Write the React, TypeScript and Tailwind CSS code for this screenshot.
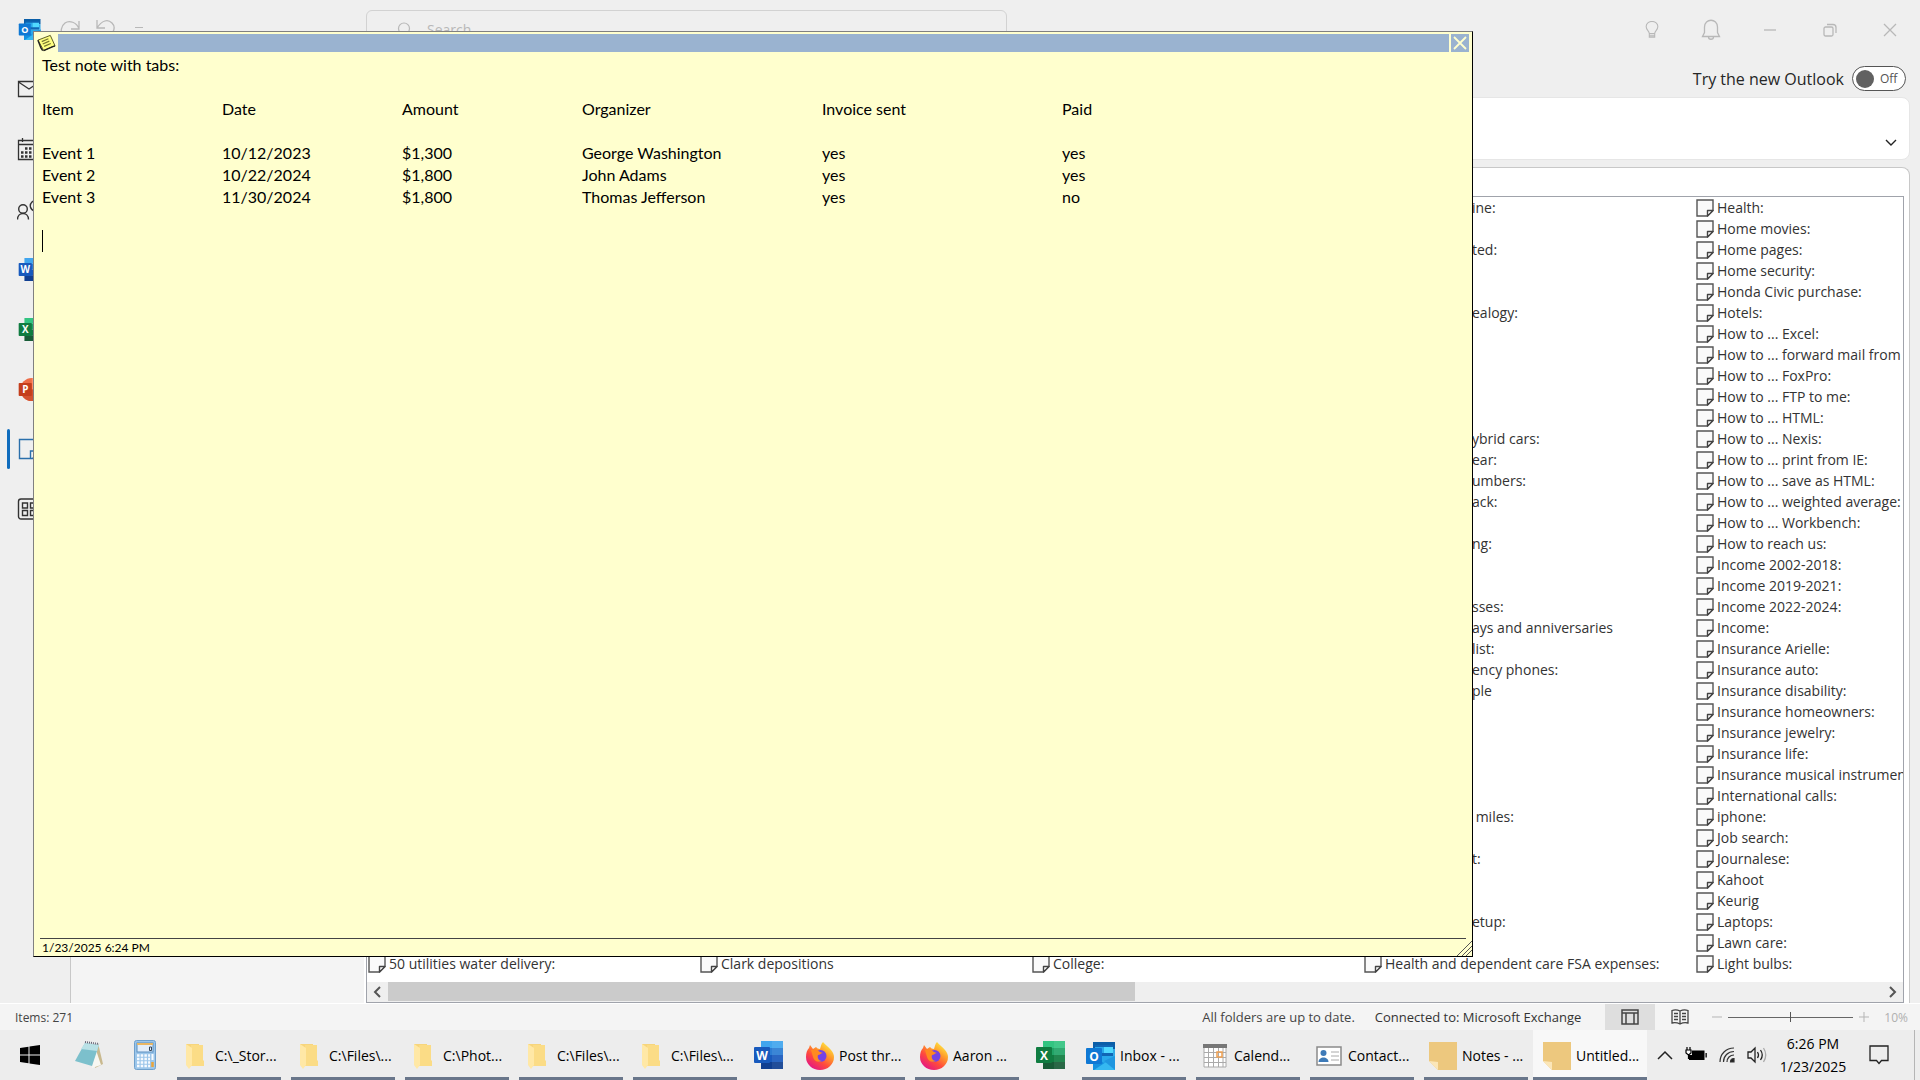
import React from 'react';

type OfficeKind = 'word' | 'excel' | 'outlook' | 'powerpoint';

interface NoteEvent {
  item: string;
  date: string;
  amount: string;
  organizer: string;
  invoice: string;
  paid: string;
}

const noteEvents: NoteEvent[] = [
  { item: 'Event 1', date: '10/12/2023', amount: '$1,300', organizer: 'George Washington', invoice: 'yes', paid: 'yes' },
  { item: 'Event 2', date: '10/22/2024', amount: '$1,800', organizer: 'John Adams', invoice: 'yes', paid: 'yes' },
  { item: 'Event 3', date: '11/30/2024', amount: '$1,800', organizer: 'Thomas Jefferson', invoice: 'yes', paid: 'no' },
];

const ROWS = 37;

// Titles that stick out past the right edge of the note window, by row
const clippedNotes: Record<number, string> = {
  0: 'ine:',
  2: 'ted:',
  5: 'ealogy:',
  11: 'ybrid cars:',
  12: 'ear:',
  13: 'umbers:',
  14: 'ack:',
  16: 'ng:',
  19: 'sses:',
  20: 'ays and anniversaries',
  21: 'list:',
  22: 'ency phones:',
  23: 'ple',
  29: ' miles:',
  31: 't:',
  34: 'etup:',
};

const lastColumn = [
  'Health:', 'Home movies:', 'Home pages:', 'Home security:', 'Honda Civic purchase:', 'Hotels:',
  'How to ... Excel:', 'How to ... forward mail from', 'How to ... FoxPro:', 'How to ... FTP to me:',
  'How to ... HTML:', 'How to ... Nexis:', 'How to ... print from IE:', 'How to ... save as HTML:',
  'How to ... weighted average:', 'How to ... Workbench:', 'How to reach us:', 'Income 2002-2018:',
  'Income 2019-2021:', 'Income 2022-2024:', 'Income:', 'Insurance Arielle:', 'Insurance auto:',
  'Insurance disability:', 'Insurance homeowners:', 'Insurance jewelry:', 'Insurance life:',
  'Insurance musical instrument', 'International calls:', 'iphone:', 'Job search:', 'Journalese:',
  'Kahoot', 'Keurig', 'Laptops:', 'Lawn care:', 'Light bulbs:',
];

const officeColors: Record<OfficeKind, { letter: string; tile: string; bands: string[] }> = {
  word: { letter: 'W', tile: '#185abd', bands: ['#41a5ee', '#2b7cd3', '#185abd', '#103f91'] },
  excel: { letter: 'X', tile: '#107c41', bands: ['#33c481', '#21a366', '#107c41', '#185c37'] },
  outlook: { letter: 'O', tile: '#0f78d4', bands: ['#0a5ea8', '#32a9e7', '#28a8ea', '#1490df'] },
  powerpoint: { letter: 'P', tile: '#c43e1c', bands: [] },
};

const OfficeIcon: React.FC<{ kind: OfficeKind; className?: string }> = ({ kind, className }) => {
  const { letter, tile, bands } = officeColors[kind];
  return (
    <svg viewBox="0 0 30 28" className={className} aria-hidden="true">
      {kind === 'powerpoint' && (
        <>
          <circle cx="16" cy="14" r="14" fill="#ed6c47" />
          <path d="M16 0a14 14 0 0 1 14 14H16z" fill="#ff8f6b" />
          <path d="M2 14h28a14 14 0 0 1-28 0z" fill="#d35230" />
        </>
      )}
      {bands.map((color, i) => (
        <rect key={color} x="7" y={i * 7} width="22" height="7" fill={color} />
      ))}
      {(kind === 'word' || kind === 'excel') && <rect x="18" y="0" width="11" height="28" fill="#fff" opacity="0.08" />}
      {kind === 'outlook' && (
        <>
          <path d="M9 3h18v11H9z" fill="#1066b5" />
          <path d="M18 5h9v6h-9z" fill="#50d9ff" />
          <path d="M9 5h9v6H9z" fill="#28a8ea" />
          <path d="M7 14l11 7 11-7v14H7z" fill="#1490df" />
          <path d="M29 14L8 28h21z" fill="#35b8f1" />
          <path d="M18 19l11 9V14z" fill="#1f96e0" />
        </>
      )}
      <rect x="0" y="6" width="16" height="16" rx="1" fill={tile} />
      <text x="8" y="18.5" textAnchor="middle" fontSize="12" fontWeight="700" fontFamily="Open Sans, sans-serif" fill="#fff">
        {letter}
      </text>
    </svg>
  );
};

const NoteIcon = () => (
  <svg viewBox="0 0 18 18" className="size-[18px] shrink-0" aria-hidden="true">
    <path d="M1 1h16v10.500l-5.500 5.500H1z" fill="#fafafa" stroke="#555" strokeWidth="1.400" />
    <path d="M17 11.500h-5.500V17z" fill="#fff" stroke="#444" strokeWidth="1.400" strokeLinejoin="round" />
  </svg>
);

const FolderIcon = () => (
  <svg viewBox="0 0 20 28" className="h-7 w-5" aria-hidden="true">
    <path d="M0 2h13v3h2v18H0z" fill="#f7d57c" />
    <path d="M5 3h12v15l1 1v5H5z" fill="#fbdc86" />
    <path d="M0 2l6 4v17l-3 4-3-4z" fill="#ffe8a6" />
  </svg>
);

const FirefoxIcon = () => (
  <svg viewBox="0 0 28 28" className="size-7" aria-hidden="true">
    <defs>
      <linearGradient id="ff" x1="0.850" y1="0.050" x2="0.200" y2="0.950">
        <stop offset="0" stopColor="#fff044" />
        <stop offset="0.350" stopColor="#ff9a2b" />
        <stop offset="0.650" stopColor="#ff4a3c" />
        <stop offset="1" stopColor="#e31587" />
      </linearGradient>
    </defs>
    <path d="M17 0c2 3 6 5 8 8 2 2 3 5 3 7a14 13 0 0 1-28 0c0-4 1-7 3-9l1-3 3 4 3-2c1 1 2 2 4 2 1-3 1-5 3-7z" fill="url(#ff)" />
    <circle cx="14.500" cy="14" r="6" fill="#7542e5" />
    <path d="M5 8c3-1 6-1 9 2l3 1c-2 0-3 2-5 2-1 3 1 6 4 6-4 2-8 0-9-4z" fill="#ff8a1f" />
  </svg>
);

const CalendarIcon = () => (
  <svg viewBox="0 0 24 24" className="size-6" aria-hidden="true">
    <path d="M1 1h22v22H1z" fill="#fff" stroke="#aaa" />
    <path d="M0 0h24v4H0z" fill="#777" />
    <path d="M5.500 4v19M10.500 4v19M15.500 4v19M20 4v19M1 8.500h22M1 13.500h22M1 18.500h22" stroke="#aaa" />
    <path d="M14 8h5v5h-5z" fill="none" stroke="#f0a050" strokeWidth="1.500" />
  </svg>
);

const ContactIcon = () => (
  <svg viewBox="0 0 26 20" className="h-5 w-[26px]" aria-hidden="true">
    <path d="M1 1h24v18H1z" fill="#fff" stroke="#8a8a8a" strokeWidth="1.500" />
    <circle cx="7.500" cy="7" r="3" fill="#3d7ab8" />
    <path d="M2.500 16c0-6 10-6 10 0z" fill="#3d7ab8" />
    <path d="M15 6h8M15 10h8M15 14h8" stroke="#aaa" />
  </svg>
);

const StickyIcon = () => (
  <svg viewBox="0 0 28 28" className="size-7" aria-hidden="true">
    <path d="M0 0h28v28H9L0 19z" fill="#edc87e" />
    <path d="M0 19l9 1v8z" fill="#fbe6b8" />
  </svg>
);

const NotepadIcon = () => (
  <svg viewBox="0 0 30 30" className="size-[30px]" aria-hidden="true">
    <path d="M24 3l5 21-8 4z" fill="#c9b98f" />
    <path d="M21 7l6 18-9 3z" fill="#f7f7f2" />
    <path d="M11 3l14 2-7 21L1 21z" fill="#7cc0cc" />
    <path d="M11 3l14 2-2 6L7 9z" fill="#b9e1e6" />
    <path d="M11 2l14 2" stroke="#667" strokeWidth="2" strokeDasharray="1 1" />
  </svg>
);

const CalculatorIcon = () => (
  <svg viewBox="0 0 22 30" className="h-[30px] w-[22px]" aria-hidden="true">
    <rect x="0.500" y="0.500" width="21" height="29" rx="2" fill="#9cc6ea" stroke="#6fa0cc" />
    <rect x="3" y="3" width="16" height="9" fill="#e3eefa" stroke="#5b8fc0" />
    <path d="M3 3h16v2H3z" fill="#e9b765" />
    <path d="M15.500 7h2v3.500h-2z" fill="none" stroke="#345" />
    <path d="M3 15.500h13M3 19h13M3 22.500h13M3 26h13" stroke="#f7fbff" strokeWidth="2.500" strokeDasharray="2.500 1.200" />
    <path d="M18.500 14v6" stroke="#f7fbff" strokeWidth="2" />
    <path d="M18.500 22v5" stroke="#eba43a" strokeWidth="2.500" />
  </svg>
);

const railIcons: { label: string; icon: React.ReactNode; active?: boolean }[] = [
  {
    label: 'Mail',
    icon: (
      <svg viewBox="0 0 24 24" className="size-6" fill="none" stroke="#333" strokeWidth="1.300">
        <path d="M1.500 4.500h21v15h-21zM1.500 5l10.500 7 10.500-7" />
      </svg>
    ),
  },
  {
    label: 'Calendar',
    icon: (
      <svg viewBox="0 0 24 24" className="size-6" fill="none" stroke="#333" strokeWidth="1.300">
        <path d="M1.500 3.500h21v19h-21zM1.500 7.500h21M5.500 1v4M18.500 1v4" />
        <path d="M8 11.500h11M4 15.500h15M4 19.500h11" strokeWidth="2.500" strokeDasharray="2.500 1.500" />
      </svg>
    ),
  },
  {
    label: 'People',
    icon: (
      <svg viewBox="0 0 24 24" className="size-6" fill="none" stroke="#333" strokeWidth="1.400">
        <circle cx="6" cy="12" r="4.300" />
        <path d="M0.500 22.500c0-8 11-8 11 0M18 14c-5-1-6-6-3-9s8-1 8 3" />
      </svg>
    ),
  },
  { label: 'Word', icon: <OfficeIcon kind="word" className="h-[23px] w-7" /> },
  { label: 'Excel', icon: <OfficeIcon kind="excel" className="h-[23px] w-7" /> },
  { label: 'PowerPoint', icon: <OfficeIcon kind="powerpoint" className="h-[23px] w-7" /> },
  {
    label: 'Notes',
    active: true,
    icon: (
      <svg viewBox="0 0 24 24" className="size-6" fill="none" stroke="#2a6fab" strokeWidth="1.400">
        <path d="M2.500 2.500h19v13l-6 6h-13zM21.500 14h-8v7.500" />
      </svg>
    ),
  },
  {
    label: 'More apps',
    icon: (
      <svg viewBox="0 0 24 24" className="size-6" fill="none" stroke="#333" strokeWidth="1.400">
        <rect x="1.500" y="2" width="21" height="20" rx="2.500" />
        <path d="M5.500 6h5v5h-5zM13.500 6h5v5h-5zM5.500 13.500h5v5h-5zM13.500 13.500h5v5h-5z" />
      </svg>
    ),
  },
];

const TitleBar = () => (
  <header className="flex h-[59px] shrink-0 items-center pl-[18px] pr-0.5 text-[#b8b8b8]">
    <OfficeIcon kind="outlook" className="h-[21px] w-6 shrink-0" />
    <button aria-label="Undo" className="ml-[18px]">
      <svg viewBox="0 0 20 20" className="size-5" fill="none" stroke="currentColor" strokeWidth="1.300">
        <path d="M19 1v8h-8M19 9C17 2 9 0 5 3s-5 9-2 13" />
      </svg>
    </button>
    <button aria-label="Redo" className="ml-4">
      <svg viewBox="0 0 20 20" className="size-5" fill="none" stroke="currentColor" strokeWidth="1.300">
        <path d="M1 0v8h8M1 8C6 0 12-1 16 3s2 9-3 14" />
      </svg>
    </button>
    <button aria-label="Customize toolbar" className="ml-[18px]">
      <svg viewBox="0 0 10 10" className="size-2.5" fill="none" stroke="currentColor">
        <path d="M1 2.500h8M1 6.500h8" />
      </svg>
    </button>
    <label className="ml-[222px] flex h-10 w-[641px] items-center gap-4 rounded-md border border-[#d2d2d2] pl-7">
      <svg viewBox="0 0 16 16" className="size-4" fill="none" stroke="currentColor" strokeWidth="1.200">
        <circle cx="9" cy="6.500" r="5.500" />
        <path d="M5 10.500l-4 4.500" />
      </svg>
      <input type="text" aria-label="Search" placeholder="Search" className="flex-1 bg-transparent text-sm placeholder:text-[#b8b8b8]" />
    </label>
    <div className="ml-auto flex items-center">
      <button aria-label="Tips" className="flex w-14 justify-center">
        <svg viewBox="0 0 16 20" className="h-[18px] w-4" fill="none" stroke="currentColor" strokeWidth="1.200">
          <path d="M5 14c0-3-3.500-4-3.500-8a6.500 5.500 0 0 1 13 0c0 4-3.500 5-3.500 8zM5 14v4h6v-4M5 16.500h6" />
        </svg>
      </button>
      <button aria-label="Notifications" className="flex w-[62px] justify-center">
        <svg viewBox="0 0 20 22" className="h-[22px] w-5" fill="none" stroke="currentColor" strokeWidth="1.300">
          <path d="M1.500 17.500h17l-2-4V8c0-9-13-9-13 0v5.500zM7.500 18c0 3 5 3 5 0" />
        </svg>
      </button>
      <button aria-label="Minimize" className="flex w-14 justify-center">
        <svg viewBox="0 0 14 14" className="size-3.5" stroke="currentColor" strokeWidth="1.300"><path d="M1 7h12" /></svg>
      </button>
      <button aria-label="Restore" className="flex w-16 justify-center">
        <svg viewBox="0 0 14 14" className="size-3.5" fill="none" stroke="currentColor" strokeWidth="1.300">
          <rect x="1" y="4" width="9" height="9" rx="1.500" />
          <path d="M4 1.500h6q3 0 3 3V10" />
        </svg>
      </button>
      <button aria-label="Close" className="flex w-14 justify-center">
        <svg viewBox="0 0 14 14" className="size-3.5" stroke="currentColor" strokeWidth="1.300"><path d="M1 1l12 12M13 1L1 13" /></svg>
      </button>
    </div>
  </header>
);

const NavRail = () => (
  <nav className="flex w-[70px] shrink-0 flex-col">
    {railIcons.map(({ label, icon, active }) => (
      <button key={label} aria-label={label} className="flex h-[60px] items-center">
        <span className={active ? 'ml-[7px] mr-[7px] h-10 w-[3px] rounded bg-[#0f6cbd]' : 'w-[17px]'} />
        {icon}
      </button>
    ))}
  </nav>
);

const NoteItem: React.FC<{ title: string }> = ({ title }) => (
  <li className="flex h-[21px] items-center gap-[3px] whitespace-nowrap">
    <NoteIcon />
    {title}
  </li>
);

const NotesList = () => (
  <div className="flex flex-1 flex-col overflow-hidden border border-[#a0a3ab] bg-white">
    <div className="flex flex-1 overflow-hidden pl-px text-sm leading-[21px] text-[#333]">
      {['50 utilities water delivery:', 'Clark depositions', 'College:'].map((title) => (
        <ul key={title} className="flex w-[332px] shrink-0 flex-col justify-end pb-2">
          <NoteItem title={title} />
        </ul>
      ))}
      <ul className="w-[332px] shrink-0">
        {Array.from({ length: ROWS - 1 }, (_, i) => (
          <li key={i} className="h-[21px] whitespace-pre pl-[108px]">{clippedNotes[i] ?? ''}</li>
        ))}
        <NoteItem title="Health and dependent care FSA expenses:" />
      </ul>
      <ul className="w-[332px] shrink-0">
        {lastColumn.map((title) => <NoteItem key={title} title={title} />)}
      </ul>
    </div>
    <div className="flex h-5 shrink-0 items-center bg-[#efefef] text-[#555]">
      <button aria-label="Scroll left" className="flex w-[21px] pl-1.5">
        <svg viewBox="0 0 8 12" className="h-3 w-2" fill="none" stroke="currentColor" strokeWidth="2"><path d="M7 1L2 6l5 5" /></svg>
      </button>
      <div className="flex h-full flex-1"><div className="h-[19px] w-1/2 bg-[#cbcbcb]" /></div>
      <button aria-label="Scroll right" className="flex w-[21px] justify-center">
        <svg viewBox="0 0 8 12" className="h-3 w-2" fill="none" stroke="currentColor" strokeWidth="2"><path d="M1 1l5 5-5 5" /></svg>
      </button>
    </div>
  </div>
);

const StatusBar = () => (
  <footer className="flex h-[27px] shrink-0 items-center border-t border-white bg-[#f4f4f4] pl-[15px] pr-3 text-xs text-[#444]">
    <span className="pt-0.5">Items: 271</span>
    <span className="ml-auto pt-0.5 text-[13px]">All folders are up to date.</span>
    <span className="ml-5 pt-0.5 text-[13px] text-[#333]">Connected to: Microsoft Exchange</span>
    <button aria-label="Normal view" className="ml-6 flex h-full w-[50px] items-center justify-center bg-[#dedede]">
      <svg viewBox="0 0 18 16" className="h-4 w-[18px]" fill="none" stroke="#444" strokeWidth="1.500">
        <path d="M1 1h16v14H1zM1 4h16M5 4v11M13 4v11" />
      </svg>
    </button>
    <button aria-label="Reading view" className="flex w-[50px] justify-center">
      <svg viewBox="0 0 18 16" className="h-4 w-[18px]" fill="none" stroke="#444" strokeWidth="1.300">
        <path d="M9 2Q5 0 1 1.500V14q4-1 8 1 4-2 8-1V1.500Q13 0 9 2v13M3 4.500h4M3 7.500h4M3 10.500h4M11 4.500h4M11 7.500h4M11 10.500h4" />
      </svg>
    </button>
    <button aria-label="Zoom out" className="ml-1.5">
      <svg viewBox="0 0 12 12" className="size-3" stroke="#b5b5b5"><path d="M1 6h10" /></svg>
    </button>
    <input
      type="range"
      aria-label="Zoom"
      defaultValue={50}
      className="mx-[5px] h-2.5 w-[125px] appearance-none bg-[linear-gradient(#666,#666)] bg-[length:100%_1px] bg-center bg-no-repeat [&::-webkit-slider-thumb]:h-2.5 [&::-webkit-slider-thumb]:w-px [&::-webkit-slider-thumb]:appearance-none [&::-webkit-slider-thumb]:bg-[#555]"
    />
    <button aria-label="Zoom in">
      <svg viewBox="0 0 12 12" className="size-3" stroke="#b5b5b5"><path d="M1 6h10M6 1v10" /></svg>
    </button>
    <span className="ml-3.5 pt-0.5 text-[#b0b0b0]">10%</span>
  </footer>
);

const NoteWindow = () => (
  <section
    aria-label="Note"
    className="absolute bottom-[123px] left-[33px] right-[447px] top-[31px] flex flex-col border border-b-black border-l-[#808080] border-r-black border-t-[#808080] bg-[#ffffce] text-black"
  >
    <div className="flex h-5 items-end gap-0.5 pl-[3px] pr-[3px]">
      <svg viewBox="0 0 20 18" className="h-[18px] w-[19px]" aria-hidden="true">
        <path d="M1 6L14 1l5 11-3 1-9 4-1-2z" fill="#ffff80" stroke="#555520" />
        <path d="M6 17l-2-3-3-8M7 17l9-4 3-1" fill="none" stroke="#222" strokeWidth="1.500" />
        <path d="M5 7.500l7-3M6 10l7-3M7.500 12.500l7-3" stroke="#777730" strokeWidth="1.300" />
      </svg>
      <div className="h-[18px] flex-1 bg-[#9ab3d0]" />
      <button aria-label="Close note" className="flex size-[18px] items-center justify-center bg-[#9ab3d0]">
        <svg viewBox="0 0 14 14" className="size-3.5" stroke="#ffffce" strokeWidth="1.800"><path d="M1 1l12 12M13 1L1 13" /></svg>
      </button>
    </div>
    <div className="flex-1 px-2 pt-0.5 font-[Lato,sans-serif] text-base leading-[22px]">
      <p className="mb-[22px]">Test note with tabs:</p>
      <table className="table-fixed text-left">
        <thead>
          <tr className="h-11 align-top">
            <th className="w-[180px] p-0 font-normal">Item</th>
            <th className="w-[180px] p-0 font-normal">Date</th>
            <th className="w-[180px] p-0 font-normal">Amount</th>
            <th className="w-[240px] p-0 font-normal">Organizer</th>
            <th className="w-[240px] p-0 font-normal">Invoice sent</th>
            <th className="w-[240px] p-0 font-normal">Paid</th>
          </tr>
        </thead>
        <tbody>
          {noteEvents.map((e) => (
            <tr key={e.item}>
              <td className="p-0">{e.item}</td>
              <td className="p-0">{e.date}</td>
              <td className="p-0">{e.amount}</td>
              <td className="p-0">{e.organizer}</td>
              <td className="p-0">{e.invoice}</td>
              <td className="p-0">{e.paid}</td>
            </tr>
          ))}
        </tbody>
      </table>
      <div className="mt-[22px] h-[22px] w-px bg-black" />
    </div>
    <div className="ml-1.5 mr-1.5 flex h-[18px] items-center border-t border-[#444] pl-0.5 font-[Lato,sans-serif] text-xs">
      1/23/2025 6:24 PM
    </div>
    <svg viewBox="0 0 15 15" className="absolute bottom-0 right-0 size-[15px]" stroke="#555" aria-hidden="true">
      <path d="M0 15L15 0M5 15L15 5M9 15l6-6" />
    </svg>
  </section>
);

const TaskButton: React.FC<{ icon: React.ReactNode; label: string; active?: boolean }> = ({ icon, label, active }) => (
  <button className={`flex h-full w-[114px] shrink-0 flex-col ${active ? 'bg-[#f8f8f8]' : 'px-[5px]'}`}>
    <span className={`flex w-full flex-1 items-center whitespace-nowrap pt-1 ${active ? 'pl-2.5' : 'pl-[5px]'}`}>
      <span className="mr-[5px] flex w-7 justify-center">{icon}</span>
      {label}
    </span>
    <span className="h-[3px] w-full bg-[#69768a]" />
  </button>
);

const Taskbar = () => (
  <div className="flex h-[50px] shrink-0 items-center bg-[#ededed] text-sm text-black">
    <button aria-label="Start" className="flex w-[60px] justify-center">
      <svg viewBox="0 0 20 20" className="size-5" aria-hidden="true">
        <path d="M0 3l8.500-1.300v7.800H0zM9.500 1.500L20 0v9.500H9.500zM0 10.500h8.500v7.800L0 17zM9.500 10.500H20V20L9.500 18.500z" />
      </svg>
    </button>
    <button aria-label="Notepad" className="flex w-[58px] justify-center"><NotepadIcon /></button>
    <button aria-label="Calculator" className="flex w-[54px] justify-center"><CalculatorIcon /></button>
    <TaskButton icon={<FolderIcon />} label="C:\_Stor..." />
    <TaskButton icon={<FolderIcon />} label="C:\Files\..." />
    <TaskButton icon={<FolderIcon />} label="C:\Phot..." />
    <TaskButton icon={<FolderIcon />} label="C:\Files\..." />
    <TaskButton icon={<FolderIcon />} label="C:\Files\..." />
    <button aria-label="Word" className="flex w-[54px] justify-center"><OfficeIcon kind="word" className="h-7 w-[30px]" /></button>
    <TaskButton icon={<FirefoxIcon />} label="Post thr..." />
    <TaskButton icon={<FirefoxIcon />} label="Aaron ..." />
    <button aria-label="Excel" className="flex w-[53px] justify-center"><OfficeIcon kind="excel" className="h-7 w-[30px]" /></button>
    <TaskButton icon={<OfficeIcon kind="outlook" className="h-7 w-[30px] shrink-0" />} label="Inbox - ..." />
    <TaskButton icon={<CalendarIcon />} label="Calend..." />
    <TaskButton icon={<ContactIcon />} label="Contact..." />
    <TaskButton icon={<StickyIcon />} label="Notes - ..." />
    <TaskButton icon={<StickyIcon />} label="Untitled..." active />
    <div className="ml-auto flex h-full items-center border-r border-[#b5b5b5] pr-[25px]">
      <button aria-label="Show hidden icons">
        <svg viewBox="0 0 16 10" className="h-2.5 w-4" fill="none" stroke="#222" strokeWidth="1.500"><path d="M1 9l7-7 7 7" /></svg>
      </button>
      <svg viewBox="0 0 22 16" className="ml-3 h-4 w-[22px]" aria-hidden="true">
        <path d="M7 3.500h12.500V13H4V8h3z" />
        <path d="M20.500 6h1.300v4.500h-1.300z" />
        <path d="M2 0v3M5 0v3M1 3h5v3l-2.500 2L1 6z" stroke="#000" strokeWidth="1.200" fill="#fff" />
        <path d="M3.500 8v4" stroke="#000" strokeWidth="1.200" />
      </svg>
      <svg viewBox="0 0 16 16" className="ml-3 size-4" fill="none" stroke="#333" strokeWidth="1.200" aria-hidden="true">
        <path d="M1 15C1 7 7 1 15 1M4.500 15C4.500 9 9 4.500 15 4.500M8 15c0-4 3-7 7-7" />
        <path d="M11.500 15c0-2 1.500-3.500 3.500-3.500V15z" fill="#222" />
      </svg>
      <svg viewBox="0 0 20 18" className="ml-3 h-[18px] w-5" fill="none" stroke="#222" strokeWidth="1.300" aria-hidden="true">
        <path d="M1 6h3l4-4v14l-4-4H1zM10.500 6q2 3 0 6M13.500 4q3.500 5 0 10" />
        <path d="M16.500 2q4.500 7 0 14" stroke="#aaa" />
      </svg>
      <div className="ml-3 w-[68px] text-center leading-[23px]">
        <div>6:26 PM</div>
        <div>1/23/2025</div>
      </div>
      <button aria-label="Action center" className="ml-[22px]">
        <svg viewBox="0 0 20 20" className="size-5" fill="none" stroke="#222" strokeWidth="1.300">
          <path d="M1 1h18v14.500h-6.500L10 18.500l-2.500-3H1z" />
        </svg>
      </button>
    </div>
    <div className="w-[5px]" />
  </div>
);

const App: React.FC = () => {
  return (
    <div className="relative flex h-screen flex-col overflow-hidden bg-[#efefef] font-['Open_Sans',sans-serif]">
      <TitleBar />
      <div className="flex min-h-0 flex-1">
        <NavRail />
        <main className="flex min-w-0 flex-1 flex-col pr-2.5">
          <div className="flex h-[38px] shrink-0 items-center justify-end gap-2 pr-1 pt-px text-[#262626]">
            <label htmlFor="new-outlook" className="text-base">Try the new Outlook</label>
            <button
              id="new-outlook"
              role="switch"
              aria-checked="false"
              className="flex h-[25px] w-[54px] items-center gap-1.5 rounded-full border border-[#555] bg-white pl-[3px] text-xs text-[#555]"
            >
              <span className="size-[18px] rounded-full bg-[#616161]" />
              Off
            </button>
          </div>
          <div className="flex h-[63px] shrink-0 items-end justify-end rounded-lg border border-[#e6e6e6] bg-white pb-3 pr-3">
            <button aria-label="Expand ribbon">
              <svg viewBox="0 0 12 8" className="h-2 w-3" fill="none" stroke="#222" strokeWidth="1.400"><path d="M1 1l5 5 5-5" /></svg>
            </button>
          </div>
          <div className="mt-[7px] flex min-h-0 flex-1 rounded-t-lg border border-b-0 border-[#c8c8c8] bg-white pr-[5px] pt-7">
            <div className="-mt-7 mr-0.5 w-[293px] shrink-0 rounded-tl-lg bg-[#f4f4f4]" />
            <NotesList />
          </div>
        </main>
      </div>
      <StatusBar />
      <Taskbar />
      <NoteWindow />
    </div>
  );
};

export default App;
